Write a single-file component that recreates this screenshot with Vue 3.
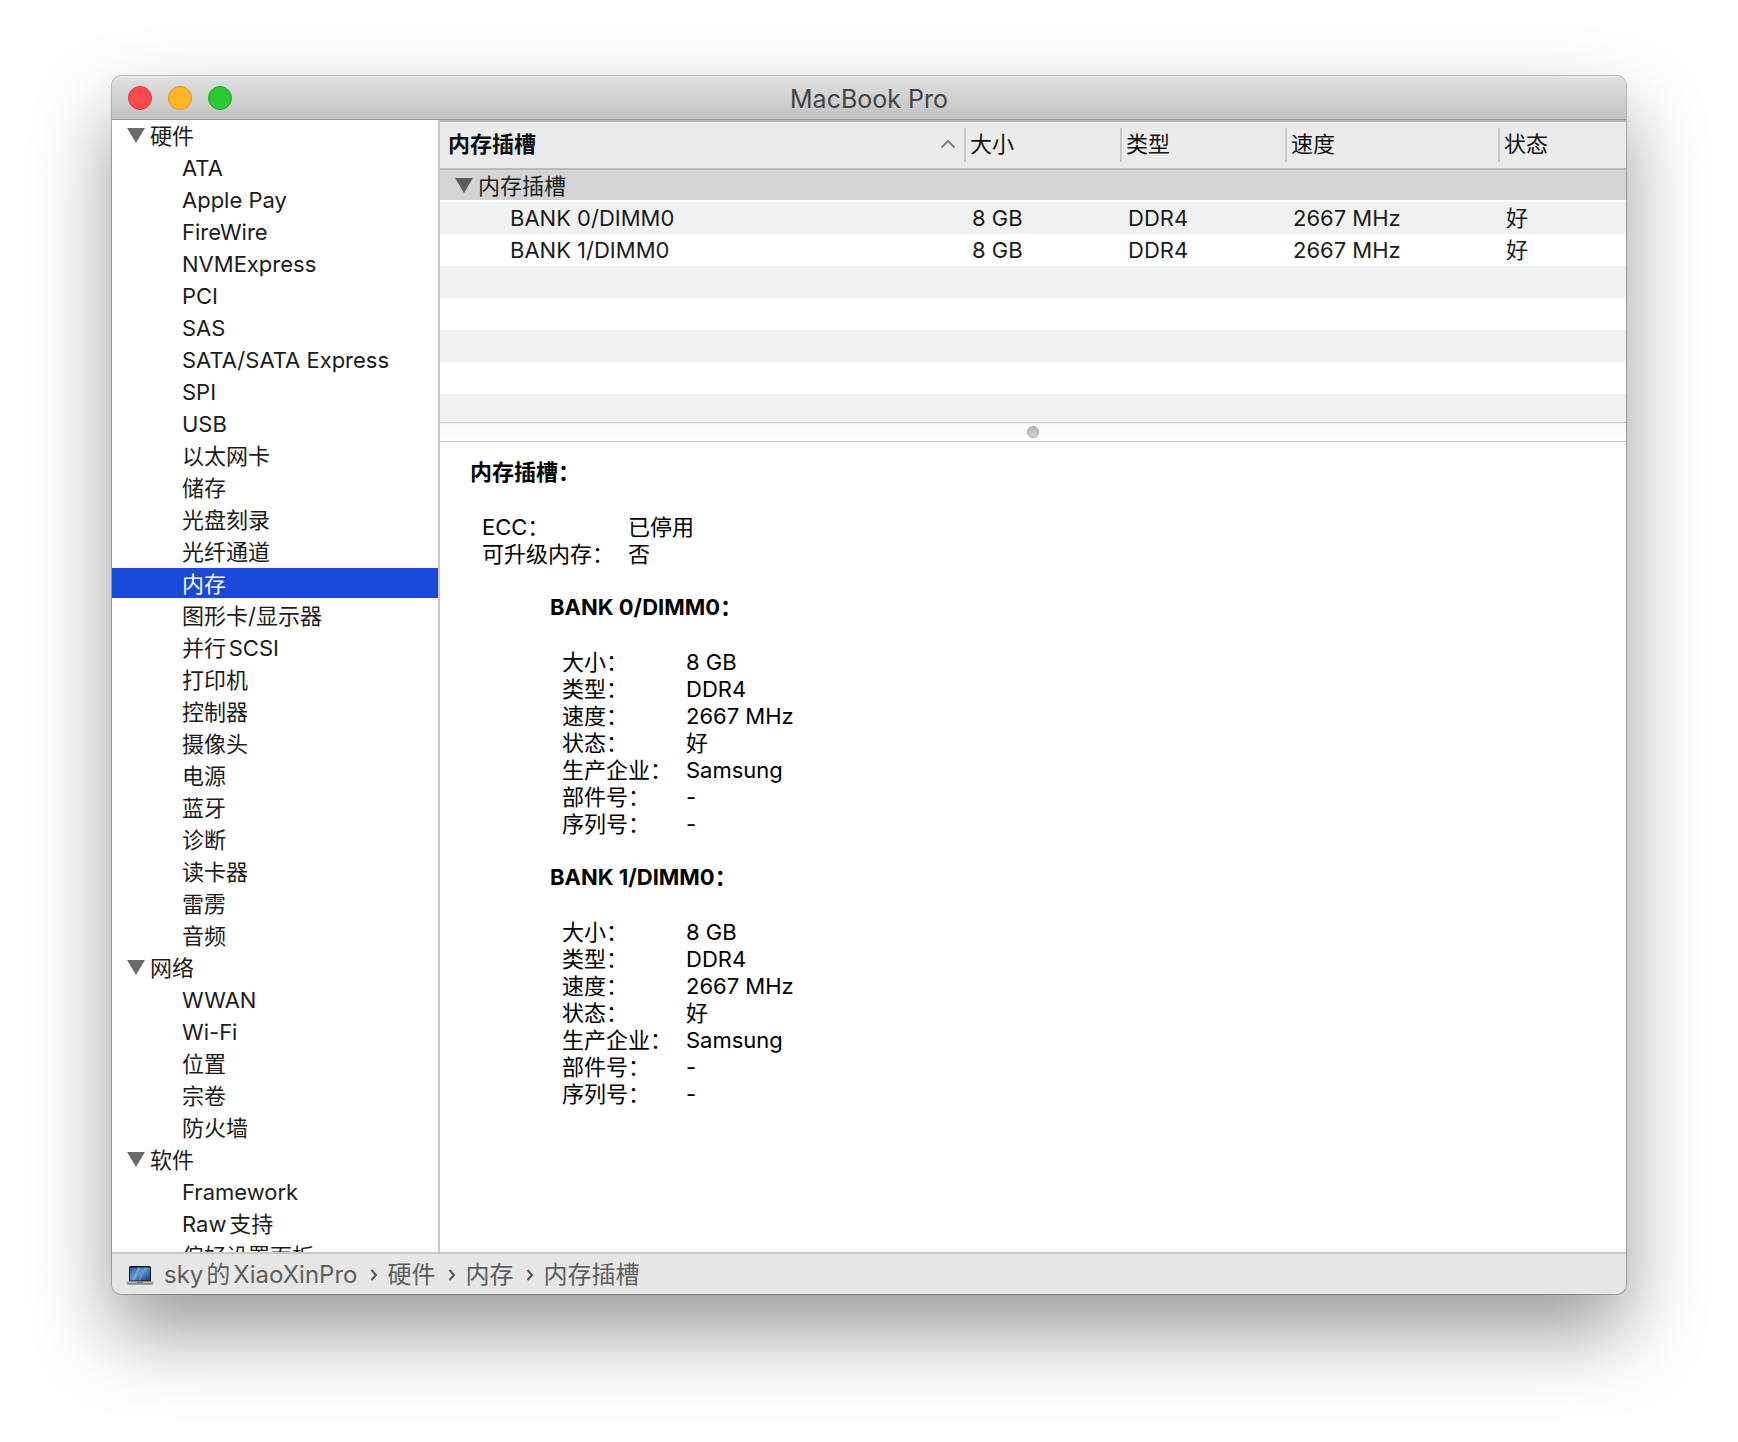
<script setup>
import { ref } from 'vue'

const selected = ref('内存')

const sections = [
  {
    title: '硬件',
    items: [
      'ATA', 'Apple Pay', 'FireWire', 'NVMExpress', 'PCI', 'SAS', 'SATA/SATA Express', 'SPI', 'USB',
      '以太网卡', '储存', '光盘刻录', '光纤通道', '内存', '图形卡/显示器', '并行SCSI', '打印机', '控制器',
      '摄像头', '电源', '蓝牙', '诊断', '读卡器', '雷雳', '音频',
    ],
  },
  { title: '网络', items: ['WWAN', 'Wi-Fi', '位置', '宗卷', '防火墙'] },
  { title: '软件', items: ['Framework', 'Raw支持', '偏好设置面板'] },
]

const banks = [
  { name: 'BANK 0/DIMM0', size: '8 GB', type: 'DDR4', speed: '2667 MHz', status: '好', maker: 'Samsung', part: '-', serial: '-' },
  { name: 'BANK 1/DIMM0', size: '8 GB', type: 'DDR4', speed: '2667 MHz', status: '好', maker: 'Samsung', part: '-', serial: '-' },
]

const fields = [
  ['大小', 'size'], ['类型', 'type'], ['速度', 'speed'], ['状态', 'status'],
  ['生产企业', 'maker'], ['部件号', 'part'], ['序列号', 'serial'],
]

const path = ['sky的XiaoXinPro', '硬件', '内存', '内存插槽']
</script>

<template>
  <div class="desktop">
    <main class="window">
      <header class="titlebar">
        <div class="lights">
          <button class="light close" type="button" aria-label="关闭"></button>
          <button class="light minimize" type="button" aria-label="最小化"></button>
          <button class="light zoom" type="button" aria-label="缩放"></button>
        </div>
        <h1>MacBook Pro</h1>
      </header>

      <div class="body">
        <nav class="sidebar">
          <section v-for="section in sections" :key="section.title">
            <button class="group" type="button" aria-expanded="true">
              <svg class="triangle" viewBox="0 0 18 15" aria-hidden="true"><path d="M0 0H18L9 15Z" /></svg>
              {{ section.title }}
            </button>
            <ul>
              <li v-for="item in section.items" :key="item">
                <button
                  class="item"
                  :class="{ active: item === selected }"
                  type="button"
                  @click="selected = item"
                >{{ item }}</button>
              </li>
            </ul>
          </section>
        </nav>

        <div class="content">
          <div class="table-pane">
            <table>
              <colgroup>
                <col />
                <col class="c-size" />
                <col class="c-type" />
                <col class="c-speed" />
                <col class="c-status" />
              </colgroup>
              <thead>
                <tr>
                  <th scope="col" class="sorted" aria-sort="ascending">
                    <button class="sort" type="button">
                      内存插槽
                      <svg class="caret" viewBox="0 0 16 10" aria-hidden="true"><path d="M1.500 8.500L8 2L14.500 8.500" /></svg>
                    </button>
                  </th>
                  <th scope="col">大小</th>
                  <th scope="col">类型</th>
                  <th scope="col">速度</th>
                  <th scope="col">状态</th>
                </tr>
              </thead>
              <tbody>
                <tr class="group-row">
                  <td colspan="5">
                    <button class="group" type="button" aria-expanded="true">
                      <svg class="triangle" viewBox="0 0 18 15" aria-hidden="true"><path d="M0 0H18L9 15Z" /></svg>
                      内存插槽
                    </button>
                  </td>
                </tr>
                <tr v-for="bank in banks" :key="bank.name">
                  <td class="name">{{ bank.name }}</td>
                  <td>{{ bank.size }}</td>
                  <td>{{ bank.type }}</td>
                  <td>{{ bank.speed }}</td>
                  <td>{{ bank.status }}</td>
                </tr>
              </tbody>
            </table>
          </div>

          <div class="splitter" role="separator" aria-orientation="horizontal"><span class="grip"></span></div>

          <article class="details">
            <h2>内存插槽：</h2>
            <dl class="summary">
              <dt>ECC：</dt><dd>已停用</dd>
              <dt>可升级内存：</dt><dd>否</dd>
            </dl>
            <section v-for="bank in banks" :key="bank.name" class="bank">
              <h3>{{ bank.name }}：</h3>
              <dl>
                <template v-for="[label, key] in fields" :key="key">
                  <dt>{{ label }}：</dt><dd>{{ bank[key] }}</dd>
                </template>
              </dl>
            </section>
          </article>
        </div>
      </div>

      <footer class="pathbar">
        <svg class="laptop" viewBox="0 0 28 19" aria-hidden="true">
          <defs>
            <linearGradient id="screen" x1="0" y1="0" x2="1" y2="1">
              <stop offset="0" stop-color="#2c5c9e" />
              <stop offset="0.45" stop-color="#5c94d2" />
              <stop offset="1" stop-color="#123a86" />
            </linearGradient>
          </defs>
          <rect x="3" y="0" width="22" height="16" rx="1.500" fill="#0d1018" />
          <rect x="4" y="1.500" width="20" height="13" fill="url(#screen)" />
          <path d="M6 14.500L12 1.500H14.500L8.500 14.500ZM12.500 14.500L19 1.500H20L14 14.500Z" fill="#a6ccf0" opacity="0.400" />
          <path d="M0 15.500H28V17Q27 18.800 25 18.800H3Q1 18.800 0 17Z" fill="#85878a" />
          <path d="M0 15.500H28V16.800H0Z" fill="#c4c6c8" />
          <path d="M11 15.500H17V17H11Z" fill="#7c7e80" />
        </svg>
        <ol>
          <li v-for="(part, i) in path" :key="part">
            <svg v-if="i" class="chevron" viewBox="0 0 8 12" aria-hidden="true"><path d="M1.500 1L6 6L1.500 11" /></svg>
            <a href="#">{{ part }}</a>
          </li>
        </ol>
      </footer>
    </main>
  </div>
</template>

<style>
body {
  margin: 0;
  background: #fff;
}
</style>

<style scoped>
.desktop {
  box-sizing: border-box;
  display: flex;
  height: 100vh;
  padding: 76px 112px 148px;
  font: 22px/32px Inter, "Noto Sans CJK SC", sans-serif;
  text-autospace: normal;
  color: #1c1c1c;
}
.window {
  flex: 1;
  display: flex;
  flex-direction: column;
  min-width: 0;
  overflow: hidden;
  border-radius: 10px;
  background: #fff;
  box-shadow: 0 0 0 1px rgba(0, 0, 0, 0.25), 0 38px 80px rgba(0, 0, 0, 0.4);
}
button {
  padding: 0;
  border: 0;
  background: none;
  color: inherit;
  font: inherit;
  text-align: left;
}
ul, ol, dl, dd, h1, h2, h3 {
  margin: 0;
  padding: 0;
  list-style: none;
}

.titlebar {
  box-sizing: border-box;
  flex: none;
  display: grid;
  grid-template-columns: 1fr auto 1fr;
  align-items: center;
  height: 44px;
  padding: 0 16px;
  border-top: 1px solid #f0f0f0;
  border-bottom: 1px solid #979797;
  background: linear-gradient(#e0e0e0, #c2c2c2);
}
.titlebar h1 {
  padding-top: 2px;
  color: #444;
  font-size: 25px;
  font-weight: 400;
}
.lights {
  display: flex;
  gap: 16px;
}
.light {
  box-sizing: border-box;
  width: 24px;
  height: 24px;
  border: 1px solid;
  border-radius: 50%;
}
.close { background: #ff4a4a; border-color: #e0343a; }
.minimize { background: #fdb525; border-color: #dd9520; }
.zoom { background: #2ac833; border-color: #1caa26; }

.body {
  flex: 1;
  display: flex;
  min-height: 0;
}
.sidebar {
  flex: none;
  width: 326px;
  overflow: hidden;
  border-right: 2px solid #c8c8c8;
}
.group {
  display: flex;
  align-items: center;
  gap: 5px;
  width: 100%;
  padding-left: 15px;
}
.triangle {
  width: 18px;
  height: 15px;
  margin-bottom: 2px;
  fill: #6b6b6b;
}
.item {
  display: block;
  width: 100%;
  height: 30px;
  margin-bottom: 2px;
  padding-left: 70px;
  line-height: 32px;
  white-space: nowrap;
}
.item.active {
  background: #1849da;
  color: #fff;
}

.content {
  flex: 1;
  display: flex;
  flex-direction: column;
  min-width: 0;
}
.table-pane {
  flex: none;
  height: 300px;
  border-top: 2px solid #b9b9b9;
  background: repeating-linear-gradient(#f0f2f1 0 32px, #fff 32px 64px) 0 80px / 100% 64px;
}
table {
  width: 100%;
  table-layout: fixed;
  border-collapse: separate;
  border-spacing: 0;
}
.c-size { width: 156px; }
.c-type { width: 165px; }
.c-speed { width: 213px; }
.c-status { width: 128px; }
th {
  box-sizing: border-box;
  height: 48px;
  padding: 0 0 2px;
  border-bottom: 2px solid #b9b9b9;
  background:
    linear-gradient(#c8c8c8, #c8c8c8) 0 6px / 2px 34px no-repeat
    #ebebeb;
  color: #111;
  font-weight: 400;
  text-align: left;
  text-indent: 6px;
}
th.sorted {
  background: #ebebeb;
}
.sort {
  display: flex;
  align-items: center;
  justify-content: space-between;
  width: 100%;
  padding: 0 8px;
  box-sizing: border-box;
  font-weight: 600;
  text-indent: 0;
}
.caret {
  width: 16px;
  height: 10px;
  fill: none;
  stroke: #808080;
  stroke-width: 2;
}
td {
  height: 32px;
  padding: 0 0 0 8px;
}
td.name {
  padding-left: 70px;
}
.group-row td {
  height: 30px;
  padding: 0;
  border-bottom: 2px solid #fff;
  background: #d4d4d4;
  line-height: 28px;
}
.group-row .group {
  padding-top: 2px;
}
.group-row .triangle {
  fill: #5c5c5c;
}

.splitter {
  flex: none;
  display: flex;
  align-items: center;
  justify-content: center;
  height: 18px;
  border-top: 1px solid #c8c8c8;
  border-bottom: 1px solid #c8c8c8;
  background: linear-gradient(#f8f8f8, #fff);
}
.grip {
  box-sizing: border-box;
  width: 12px;
  height: 12px;
  border: 1px solid #a4a4a4;
  border-radius: 50%;
  background: linear-gradient(#b4b4b4, #d4d4d4);
}

.details {
  flex: 1;
  min-height: 0;
  overflow: hidden;
  padding: 17px 30px;
  color: #000;
  line-height: 27px;
}
h2, h3 {
  margin-bottom: 28px;
  font-size: 22px;
  font-weight: 700;
}
dl {
  display: grid;
  grid-template-columns: 124px 1fr;
  padding-left: 12px;
}
.summary {
  grid-template-columns: 146px 1fr;
}
dt {
  white-space: nowrap;
}
.bank {
  margin-top: 26px;
  padding-left: 80px;
}

.pathbar {
  box-sizing: border-box;
  flex: none;
  display: flex;
  align-items: center;
  gap: 10px;
  height: 42px;
  padding: 2px 0 0 14px;
  border-top: 2px solid #c8c8c8;
  background: #e6e6e6;
  font-size: 24px;
}
.laptop {
  width: 28px;
  height: 19px;
}
.pathbar ol, .pathbar li {
  display: flex;
  align-items: center;
}
.pathbar a {
  color: #5e5e5e;
  text-decoration: none;
}
.chevron {
  width: 8px;
  height: 12px;
  margin: 0 9px 0 13px;
  fill: none;
  stroke: #555;
  stroke-width: 2;
}
</style>
